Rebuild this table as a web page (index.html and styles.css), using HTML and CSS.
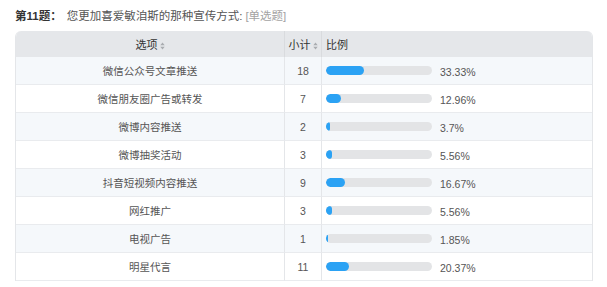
FILE: index.html
```html
<!DOCTYPE html>
<html lang="zh">
<head>
<meta charset="utf-8">
<link rel="stylesheet" href="styles.css">
</head>
<body>
<div class="wrap">
  <div class="title"><b class="qno">第11题：</b><span class="qtext">您更加喜爱敏洎斯的那种宣传方式:</span><span class="qtype">[单选题]</span></div>
  <table class="stat">
    <thead>
      <tr>
        <th class="c-opt">选项<svg class="sort" width="5" height="8" viewBox="0 0 5 8"><path d="M2.5 0.5 L4.7 3.3 H0.3 Z M2.5 7.5 L4.7 4.7 H0.3 Z" fill="#a9acb0"/></svg></th>
        <th class="c-num">小计<svg class="sort" width="5" height="8" viewBox="0 0 5 8"><path d="M2.5 0.5 L4.7 3.3 H0.3 Z M2.5 7.5 L4.7 4.7 H0.3 Z" fill="#a9acb0"/></svg></th>
        <th class="c-pct">比例</th>
      </tr>
    </thead>
    <tbody>
      <tr><td class="c-opt">微信公众号文章推送</td><td class="c-num">18</td><td class="c-pct"><div class="cell"><div class="track"><div class="fill" style="width:38px"></div></div><span class="pv">33.33%</span></div></td></tr>
      <tr><td class="c-opt">微信朋友圈广告或转发</td><td class="c-num">7</td><td class="c-pct"><div class="cell"><div class="track"><div class="fill" style="width:15px"></div></div><span class="pv">12.96%</span></div></td></tr>
      <tr><td class="c-opt">微博内容推送</td><td class="c-num">2</td><td class="c-pct"><div class="cell"><div class="track"><div class="fill" style="width:4px"></div></div><span class="pv">3.7%</span></div></td></tr>
      <tr><td class="c-opt">微博抽奖活动</td><td class="c-num">3</td><td class="c-pct"><div class="cell"><div class="track"><div class="fill" style="width:6px"></div></div><span class="pv">5.56%</span></div></td></tr>
      <tr><td class="c-opt">抖音短视频内容推送</td><td class="c-num">9</td><td class="c-pct"><div class="cell"><div class="track"><div class="fill" style="width:19px"></div></div><span class="pv">16.67%</span></div></td></tr>
      <tr><td class="c-opt">网红推广</td><td class="c-num">3</td><td class="c-pct"><div class="cell"><div class="track"><div class="fill" style="width:6px"></div></div><span class="pv">5.56%</span></div></td></tr>
      <tr><td class="c-opt">电视广告</td><td class="c-num">1</td><td class="c-pct"><div class="cell"><div class="track"><div class="fill" style="width:2px"></div></div><span class="pv">1.85%</span></div></td></tr>
      <tr><td class="c-opt">明星代言</td><td class="c-num">11</td><td class="c-pct"><div class="cell"><div class="track"><div class="fill" style="width:23px"></div></div><span class="pv">20.37%</span></div></td></tr>
    </tbody>
  </table>
</div>
</body>
</html>
```
FILE: styles.css
```css
html, body {
  margin: 0;
  padding: 0;
  background: #ffffff;
}
body {
  font-family: "Liberation Sans", "Noto Sans CJK SC", sans-serif;
  color: #555555;
}
.wrap {
  padding: 9px 14px 0 15px;
}
.title {
  font-size: 11.5px;
  line-height: 15px;
  height: 15px;
  color: #555555;
  margin-bottom: 7px;
  white-space: nowrap;
}
.qno {
  color: #333333;
  font-weight: bold;
  margin-right: 5px;
}
.qtype {
  color: #a3a3a3;
  margin-left: 3px;
}
.stat {
  width: 578px;
  border-collapse: separate;
  border-spacing: 0;
  table-layout: fixed;
  font-size: 10.5px;
  border-radius: 6px 6px 0 0;
  overflow: hidden;
  border-right: 1px solid #e4e6e9;
  border-left: 1px solid #e4e6e9;
}
.stat th {
  background: #e5e7ea;
  color: #333333;
  font-weight: normal;
  font-size: 11px;
  height: 26px;
  padding: 0;
  border-left: 1px solid #d9dbde;
}
.stat th:first-child,
.stat td:first-child {
  border-left: none;
}
.stat td {
  height: 27px;
  padding: 0;
  border-bottom: 1px solid #e9ebee;
  border-left: 1px solid #e4e6e9;
  color: #555555;
}
.stat tbody tr:nth-child(odd) td {
  background: #f5f8fb;
}
.c-opt {
  width: 268px;
  text-align: center;
}
.c-num {
  width: 36px;
  text-align: center;
}
.stat th.c-pct {
  text-align: left;
  padding-left: 4px;
}
.sort {
  margin-left: 2px;
  vertical-align: -1px;
}
.cell {
  display: flex;
  align-items: center;
  padding-left: 4px;
}
.track {
  width: 106px;
  height: 9px;
  border-radius: 5px;
  background: #e3e4e6;
  overflow: hidden;
  flex: none;
}
.fill {
  height: 100%;
  background: #2ba2f4;
  border-radius: 5px;
}
.pv {
  margin-left: 8px;
  margin-top: 2px;
}
```
